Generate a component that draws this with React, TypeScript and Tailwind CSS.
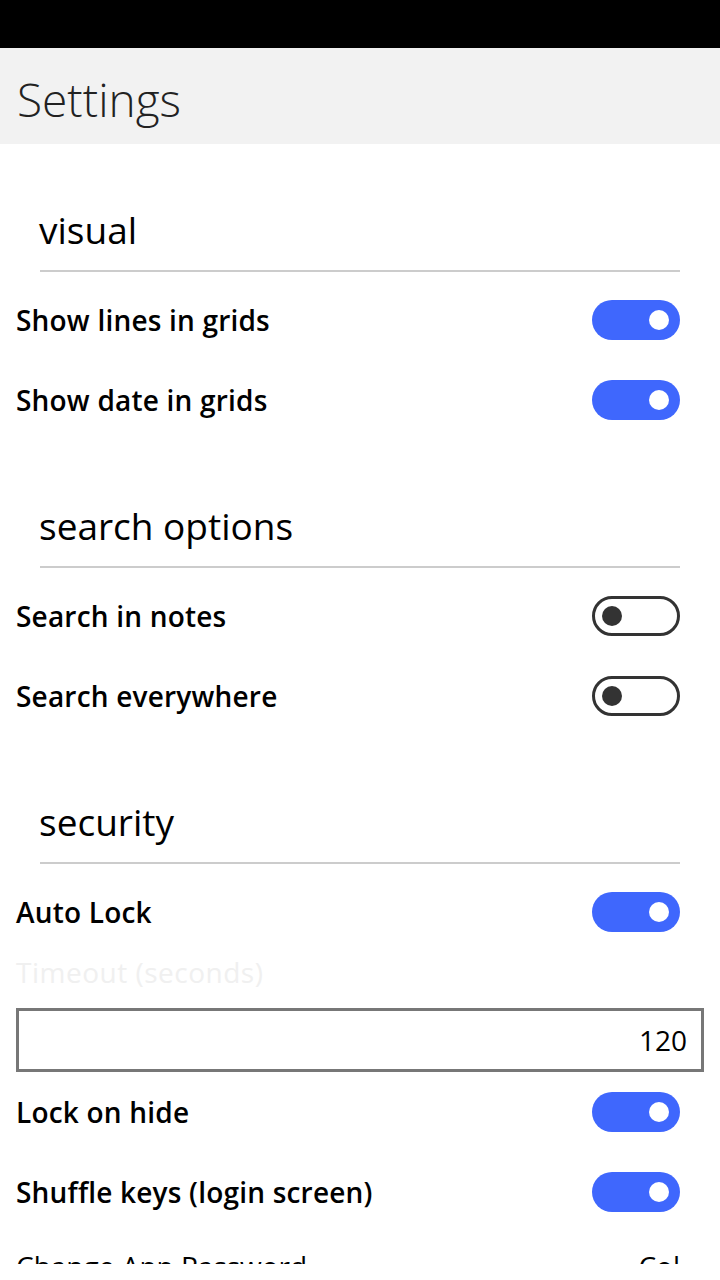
import React from 'react';

const font = { fontFamily: '"Open Sans", "Noto Sans", sans-serif' };

function Toggle({ on }: { on: boolean }) {
    if (on) {
        return (
            <div className="w-[88px] h-[40px] rounded-full bg-[#3f67fd] flex items-center justify-end pr-[11px] shrink-0">
                <div className="w-[20px] h-[20px] rounded-full bg-white" />
            </div>
        );
    }
    return (
        <div className="w-[88px] h-[40px] rounded-full border-[3px] border-[#333333] flex items-center pl-[7px] shrink-0">
            <div className="w-[20px] h-[20px] rounded-full bg-[#333333]" />
        </div>
    );
}

function Row({ label, on }: { label: string; on: boolean }) {
    return (
        <div className="h-[80px] flex items-center justify-between pl-[16px] pr-[40px]">
            <span className="text-[28px] font-semibold tracking-[0.2px] text-black">{label}</span>
            <Toggle on={on} />
        </div>
    );
}

function SectionHeader({ title }: { title: string }) {
    return (
        <div className="mt-[62px] px-[40px]">
            <div className="h-[48px] leading-[48px] text-[37px] -ml-[1px] text-black">{title}</div>
            <div className="mt-[16px] h-[2px] bg-[#cccccc]" />
            <div className="h-[8px]" />
        </div>
    );
}

export default function App() {
    return (
        <div className="w-[720px] h-[1280px] overflow-hidden bg-white" style={font}>
            <div className="h-[1264px] overflow-hidden">
                <div className="h-[48px] bg-black" />
                <div className="h-[96px] bg-[#f2f2f2] flex items-center px-[17px]">
                    <h1 className="text-[46px] font-light text-[#222222] mt-[6px]">Settings</h1>
                </div>

                <SectionHeader title="visual" />
                <Row label="Show lines in grids" on />
                <Row label="Show date in grids" on />

                <SectionHeader title="search options" />
                <Row label="Search in notes" on={false} />
                <Row label="Search everywhere" on={false} />

                <SectionHeader title="security" />
                <Row label="Auto Lock" on />
                <div className="h-[40px] flex items-center px-[16px]">
                    <span className="text-[28px] tracking-[0.5px] text-[#f0f0f0]">Timeout (seconds)</span>
                </div>
                <div className="mt-[16px] mx-[16px] h-[64px] border-[3px] border-[#777777] flex items-center justify-end px-[14px]">
                    <span className="text-[28px] text-black">120</span>
                </div>
                <Row label="Lock on hide" on />
                <Row label="Shuffle keys (login screen)" on />
                <div className="h-[68px] flex items-center justify-between pl-[16px] pr-[40px]">
                    <span className="text-[28px] text-black">Change App Password</span>
                    <span className="text-[28px] text-black">Col</span>
                </div>
            </div>
        </div>
    );
}
